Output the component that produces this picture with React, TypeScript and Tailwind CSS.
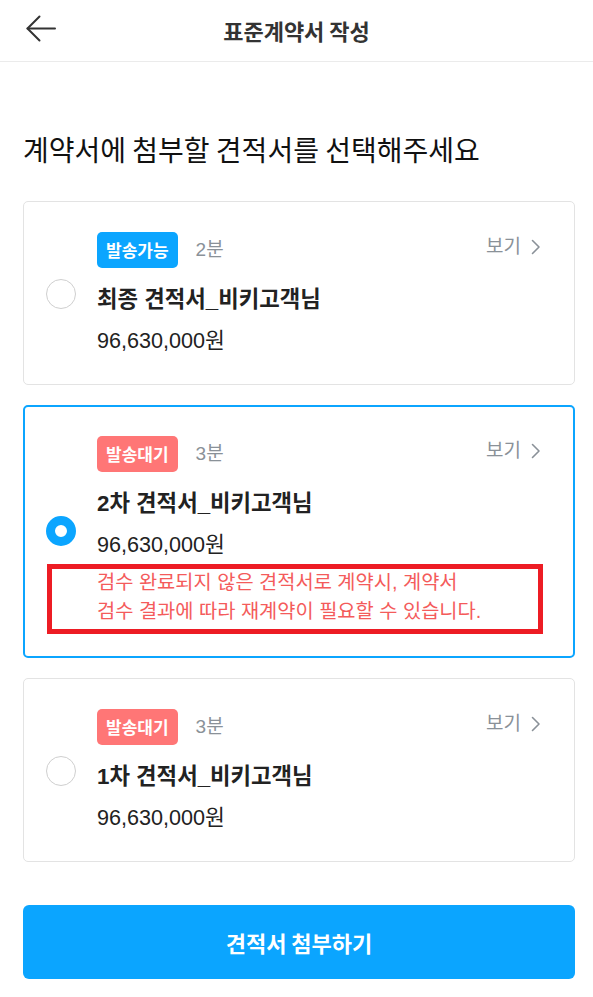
import React from "react";

const FONT = { fontFamily: '"Liberation Sans", "Noto Sans CJK KR", sans-serif' };
const KR = { fontFamily: '"Noto Sans CJK KR", sans-serif' };

function Chevron() {
  return (
    <svg width="10" height="16" viewBox="0 0 10 16" fill="none" className="ml-[10px]">
      <path d="M1.5 1.5 L8 8 L1.5 14.5" stroke="#8a9198" strokeWidth="1.6" strokeLinecap="round" strokeLinejoin="round" />
    </svg>
  );
}

function Badge({ kind }: { kind: "ok" | "wait" }) {
  return (
    <span
      className={
        "inline-flex h-[36px] items-center rounded-[5px] px-[9px] text-[17px] font-bold text-white " +
        (kind === "ok" ? "bg-[#0ba5ff]" : "bg-[#ff7676]")
      }
      style={KR}
    >
      {kind === "ok" ? "발송가능" : "발송대기"}
    </span>
  );
}

function Radio({ checked }: { checked: boolean }) {
  return checked ? (
    <div className="h-[30px] w-[30px] shrink-0 rounded-full border-[9px] border-[#0ba5ff] bg-white" />
  ) : (
    <div className="h-[30px] w-[30px] shrink-0 rounded-full border-[1.5px] border-[#cfcfcf] bg-white" />
  );
}

function Card({
  kind,
  count,
  title,
  checked,
  warning,
}: {
  kind: "ok" | "wait";
  count: string;
  title: string;
  checked: boolean;
  warning?: boolean;
}) {
  return (
    <div
      className={
        "flex items-center rounded-[5px] bg-white " +
        (checked
          ? "border-2 border-[#0ba5ff] pl-[21px] pr-[32px] pt-[29px] pb-[30px]"
          : "border border-[#e3e3e3] pl-[22px] pr-[33px] pt-[30px] pb-[29px]")
      }
    >
      <Radio checked={checked} />
      <div className="ml-[21px] flex-1">
        <div className="flex items-start justify-between">
          <div className="flex items-center">
            <Badge kind={kind} />
            <span className="ml-[18px] text-[19px] text-[#8a9198]">{count}</span>
          </div>
          <div className="mt-[1px] flex items-center text-[19px] leading-[28px] text-[#8a9198]">
            보기
            <Chevron />
          </div>
        </div>
        <div className="mt-[18px] text-[22.3px] font-bold leading-[28px] text-[#222222]">{title}</div>
        <div className="mt-[13px] text-[21.6px] leading-[28px] text-[#222222]">96,630,000원</div>
        {warning && (
          <div className="relative mt-[9px] text-[19.8px] leading-[29px] text-[#f45b5b]">
            <div>검수 완료되지 않은 견적서로 계약시, 계약서</div>
            <div>검수 결과에 따라 재계약이 필요할 수 있습니다.</div>
            <div className="pointer-events-none absolute -left-[50px] -right-[2px] -top-[4px] -bottom-[8px] border-[5px] border-[#ed1c24]" />
          </div>
        )}
      </div>
    </div>
  );
}

export default function App() {
  return (
    <div className="min-h-[997px] w-[593px] bg-white" style={FONT}>
      <header className="relative flex h-[62px] items-center justify-center border-b border-[#ebebeb]">
        <svg
          className="absolute left-[26px] top-[15px]"
          width="30"
          height="27"
          viewBox="0 0 30 27"
          fill="none"
        >
          <path d="M1.5 13.5 H29" stroke="#333" strokeWidth="2" strokeLinecap="round" />
          <path d="M13.5 1.5 L1.5 13.5 L13.5 25.5" stroke="#333" strokeWidth="2" strokeLinecap="round" strokeLinejoin="round" />
        </svg>
        <h1 className="text-[22px] font-bold text-[#333333]" style={KR}>
          표준계약서 작성
        </h1>
      </header>

      <main className="pl-[23px] pr-[18px]">
        <h2 className="mt-[68px] text-[28px] leading-[38px] text-[#111111]" style={KR}>
          계약서에 첨부할 견적서를 선택해주세요
        </h2>

        <div className="mt-[33px] flex flex-col gap-[20px]">
          <Card kind="ok" count="2분" title="최종 견적서_비키고객님" checked={false} />
          <Card kind="wait" count="3분" title="2차 견적서_비키고객님" checked warning />
          <Card kind="wait" count="3분" title="1차 견적서_비키고객님" checked={false} />
        </div>

        <button
          className="mt-[43px] flex h-[74px] w-full items-center justify-center rounded-[6px] bg-[#0ba5ff] text-[22px] font-bold text-white"
          style={KR}
        >
          견적서 첨부하기
        </button>
      </main>
    </div>
  );
}
